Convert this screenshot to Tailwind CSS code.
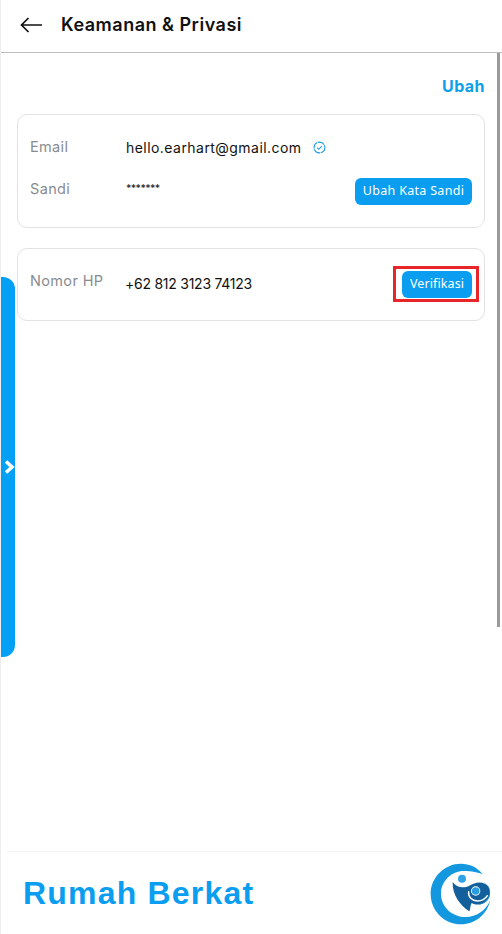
<!doctype html>
<html><head><meta charset="utf-8"><script src="https://cdn.jsdelivr.net/npm/@tailwindcss/browser@4"></script></head>
<body class="bg-white">
<div class="relative w-[502px] h-[934px] overflow-hidden bg-white flex flex-col font-['Inter',sans-serif] border-l border-[#eeeeee]">
  <header class="h-[53px] shrink-0 border-b border-[#bdbdbd] flex items-center pl-[19px] gap-[18px] pb-[3px]">
    <svg class="w-[23px] h-[16px]" viewBox="0 0 23 16" fill="none" stroke="#111" stroke-width="1.7"><path d="M22 8H1.5M8.5 1 1.5 8l7 7"/></svg>
    <h1 class="text-[18px] font-semibold text-[#111] tracking-[0.5px]">Keamanan &amp; Privasi</h1>
  </header>
  <main class="flex-1 pl-[16px] pr-[17px] pt-[23px]">
    <div class="text-right text-[16px] font-bold text-[#0ea0ea] leading-[20px] tracking-[0.45px]">Ubah</div>
    <section class="mt-[18px] h-[114px] rounded-[10px] border border-[#e2e2e2] px-[12px] pt-[22px] relative">
      <div class="flex items-center h-[20px]">
        <span class="w-[96px] text-[14.5px] text-[#888c90] tracking-[0.35px]">Email</span>
        <span class="text-[14px] text-[#111] tracking-[0.45px]">hello.earhart@gmail.com</span>
        <svg class="ml-[11px] w-[13px] h-[13px]" viewBox="0 0 13 13" fill="none" stroke="#1d9be6" stroke-width="1.1"><circle cx="6.5" cy="6.5" r="5.4" stroke-dasharray="7 .7"/><path d="M4.2 6.7 5.9 8.3 8.9 5"/></svg>
      </div>
      <div class="flex items-start mt-[22px]">
        <span class="w-[96px] text-[14.5px] leading-[20px] text-[#888c90] tracking-[0.35px]">Sandi</span>
        <span class="text-[10px] leading-[18px] text-[#333] font-semibold tracking-[-0.6px]">*******</span>
        <button class="absolute right-[12px] top-[63px] w-[117px] h-[27px] rounded-[6px] bg-[#0a9df0] text-white text-[12.5px] font-['Noto_Sans',sans-serif] tracking-[0.3px]">Ubah Kata Sandi</button>
      </div>
    </section>
    <section class="mt-[20px] h-[73px] rounded-[10px] border border-[#e2e2e2] pl-[12px] pr-[12px] flex items-start relative">
      <span class="w-[95px] mt-[22px] text-[14.5px] leading-[20px] text-[#888c90] tracking-[0.35px]">Nomor HP</span>
      <span class="mt-[25px] text-[14px] leading-[20px] text-[#111] tracking-[-0.25px]">+62 812 3123 74123</span>
      <div class="absolute right-[5px] top-[17px] w-[86px] h-[36px] border-[3px] border-[#e8262a] flex items-center justify-center pl-[2px]">
        <button class="w-[70px] h-[27px] rounded-[6px] bg-[#0a9df0] text-white text-[12.5px] font-['Noto_Sans',sans-serif] tracking-[0.1px]">Verifikasi</button>
      </div>
    </section>
  </main>
  <footer class="h-[83px] shrink-0 ml-[6px] border-t border-[#f3f3f3] flex items-center justify-between pl-[16px] pr-[10px]">
    <span class="text-[32px] leading-none font-bold text-[#0a9df0] font-['Liberation_Sans',sans-serif] tracking-[1.2px]">Rumah Berkat</span>
    <svg class="w-[62px] h-[62px] mt-[1px]" viewBox="0 0 186 186">
      <path fill="#1398e0" fill-rule="evenodd" d="M158 34C142 12 118 2 93 2 43 2 2 43 2 93s41 91 91 91c44 0 78-30 88-72-14 32-42 50-74 50-40 0-74-30-74-70 0-38 32-68 68-68 24 0 44 4 57 10Z"/>
      <path fill="#125f9b" d="M68 57c10 15 32 21 50 11 17-10 42-16 58 4 10 20 2 43-18 50-11 4-22 4-33-2-5 8-3 18-7 25-26-16-52-50-50-88Z"/>
      <path fill="#2a9de0" d="M156 56c14 4 23 16 23 30 0 18-14 34-34 38 26 0 38-22 35-42-2-12-12-24-24-26Z"/>
      <path fill="none" stroke="#fff" stroke-width="4.5" stroke-linecap="round" d="M116 86c-2 16 10 28 26 28 12 0 24-6 30-16"/>
      <circle cx="137" cy="84" r="14" fill="#fff"/><circle cx="137" cy="84" r="11.5" fill="#2a9de0"/>
      <circle cx="96" cy="47" r="12" fill="#2fa3e6"/>
      <path fill="none" stroke="#fff" stroke-width="3.5" stroke-linecap="round" d="M74 56c10 11 28 13 44 3"/>
    </svg>
  </footer>
  <div class="absolute -left-px top-[277px] w-[15px] h-[380px] rounded-r-[12px] bg-[#03a0f6] flex items-center justify-end">
    <svg class="w-[11px] h-[14px]" viewBox="0 0 11 14" fill="none" stroke="#fff" stroke-width="3.6"><path d="M2 1.5 8 7l-6 5.5"/></svg>
  </div>
  <div class="absolute right-[2px] top-[53px] w-[3px] h-[574px] bg-[#9a9a9a]"></div>
</div>
</body></html>
